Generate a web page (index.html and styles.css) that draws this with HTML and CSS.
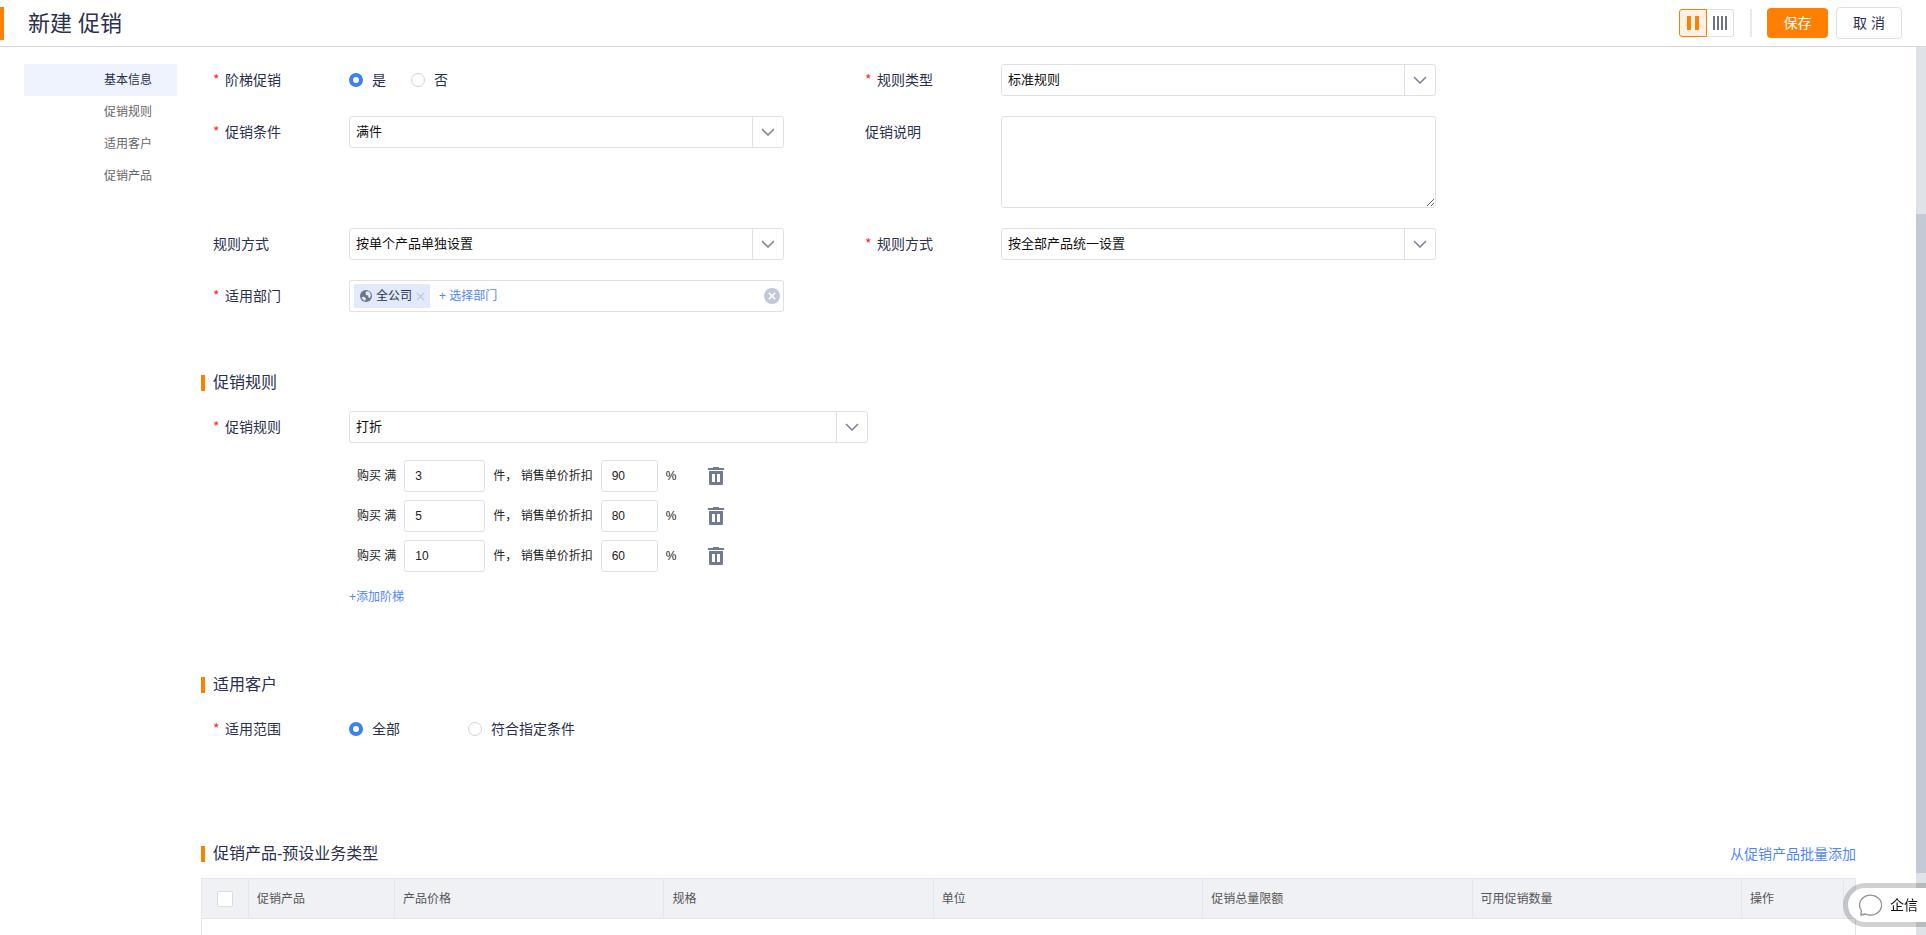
FILE: index.html
```html
<!DOCTYPE html>
<html lang="zh-CN">
<head>
<meta charset="utf-8">
<title>新建 促销</title>
<link rel="stylesheet" href="styles.css">
</head>
<body>
<svg class="symbols" aria-hidden="true">
  <symbol id="chevron" viewBox="0 0 14 8"><path d="M1 1l6 6 6-6" fill="none" stroke="currentColor" stroke-width="1.6"/></symbol>
  <symbol id="trash" viewBox="0 0 16 18"><path d="M5 0h6v1h5v2H0V1h5zM1 4h14v12.500a1.500 1.500 0 0 1-1.500 1.500h-11A1.500 1.500 0 0 1 1 16.500zM4 7v8h3V7zM9 7v8h3V7z" fill="currentColor" fill-rule="evenodd"/></symbol>
</svg>
<div class="app">
  <header class="topbar">
    <h1 class="topbar-title">新建 促销</h1>
    <div class="layout-switch">
      <button class="switch-btn active" type="button" aria-label="两列布局"><svg width="14" height="14" viewBox="0 0 14 14"><path d="M1 0h4v14H1zM9 0h4v14H9z" fill="currentColor"/></svg></button>
      <button class="switch-btn" type="button" aria-label="四列布局"><svg width="16" height="14" viewBox="0 0 16 14"><path d="M1 0h2v14H1zM5 0h2v14H5zM9 0h2v14H9zM13 0h2v14h-2z" fill="currentColor"/></svg></button>
    </div>
    <span class="topbar-divider"></span>
    <button class="btn btn-primary" type="button">保存</button>
    <button class="btn btn-plain" type="button">取 消</button>
  </header>

  <div class="body">
    <nav class="sidebar">
      <a class="nav-link active" href="#basic">基本信息</a>
      <a class="nav-link" href="#rules">促销规则</a>
      <a class="nav-link" href="#customers">适用客户</a>
      <a class="nav-link" href="#products">促销产品</a>
    </nav>

    <main class="content">
      <section class="form-grid" id="basic">
        <div class="field" role="radiogroup" aria-labelledby="ladder-label">
          <span class="label required" id="ladder-label">阶梯促销</span>
          <div class="radios">
            <label class="radio"><input type="radio" name="ladder" checked>是</label>
            <label class="radio"><input type="radio" name="ladder">否</label>
          </div>
        </div>
        <div class="field">
          <label class="label required" for="rule-type">规则类型</label>
          <div class="select"><select id="rule-type"><option>标准规则</option></select><svg class="chevron"><use href="#chevron"/></svg></div>
        </div>
        <div class="field">
          <label class="label required" for="condition">促销条件</label>
          <div class="select"><select id="condition"><option>满件</option></select><svg class="chevron"><use href="#chevron"/></svg></div>
        </div>
        <div class="field">
          <label class="label" for="description">促销说明</label>
          <textarea class="textarea" id="description"></textarea>
        </div>
        <div class="field">
          <label class="label" for="mode-single">规则方式</label>
          <div class="select"><select id="mode-single"><option>按单个产品单独设置</option></select><svg class="chevron"><use href="#chevron"/></svg></div>
        </div>
        <div class="field">
          <label class="label required" for="mode-all">规则方式</label>
          <div class="select"><select id="mode-all"><option>按全部产品统一设置</option></select><svg class="chevron"><use href="#chevron"/></svg></div>
        </div>
        <div class="field">
          <span class="label required">适用部门</span>
          <div class="picker">
            <span class="tag">
              <svg width="12" height="12" viewBox="0 0 12 12"><circle cx="6" cy="6" r="6" fill="#6b7686"/><path d="M1.500 7.500Q3 6.500 4.500 7L6 8.500 5.200 10.800Q2.500 10 1.500 7.500zM6 1.500L8.500 1.300Q10.500 2.500 10.900 5.500L10 8 8.500 7.800 8 5.500 6 5 5.500 3z" fill="#e1e9fa"/></svg>
              全公司
              <button class="tag-close" type="button" aria-label="移除"><svg width="9" height="9" viewBox="0 0 9 9"><path d="M1 1l7 7M8 1L1 8" stroke="currentColor" stroke-width="1.300"/></svg></button>
            </span>
            <a class="link link-small" href="#basic">+ 选择部门</a>
            <button class="clear" type="button" aria-label="清空"><svg width="16" height="16" viewBox="0 0 16 16"><circle cx="8" cy="8" r="8" fill="#c1c8d6"/><path d="M4.800 4.800l6.400 6.400M11.200 4.800l-6.400 6.400" stroke="#fff" stroke-width="1.600"/></svg></button>
          </div>
        </div>
      </section>

      <section class="section" id="rules">
        <div class="section-head"><h2 class="section-title">促销规则</h2></div>
        <div class="field field-wide">
          <label class="label required" for="rule">促销规则</label>
          <div class="select"><select id="rule"><option>打折</option></select><svg class="chevron"><use href="#chevron"/></svg></div>
        </div>
        <div class="tiers">
          <div class="tier">
            <label for="qty1">购买 满</label><input class="input qty" id="qty1" type="text" value="3">
            <label for="pct1">件， 销售单价折扣</label><input class="input pct" id="pct1" type="text" value="90"><span>%</span>
            <button class="trash" type="button" aria-label="删除"><svg><use href="#trash"/></svg></button>
          </div>
          <div class="tier">
            <label for="qty2">购买 满</label><input class="input qty" id="qty2" type="text" value="5">
            <label for="pct2">件， 销售单价折扣</label><input class="input pct" id="pct2" type="text" value="80"><span>%</span>
            <button class="trash" type="button" aria-label="删除"><svg><use href="#trash"/></svg></button>
          </div>
          <div class="tier">
            <label for="qty3">购买 满</label><input class="input qty" id="qty3" type="text" value="10">
            <label for="pct3">件， 销售单价折扣</label><input class="input pct" id="pct3" type="text" value="60"><span>%</span>
            <button class="trash" type="button" aria-label="删除"><svg><use href="#trash"/></svg></button>
          </div>
          <a class="link link-small add-tier" href="#rules">+添加阶梯</a>
        </div>
      </section>

      <section class="section" id="customers">
        <div class="section-head"><h2 class="section-title">适用客户</h2></div>
        <div class="field" role="radiogroup" aria-labelledby="scope-label">
          <span class="label required" id="scope-label">适用范围</span>
          <div class="radios radios-spread">
            <label class="radio"><input type="radio" name="scope" checked>全部</label>
            <label class="radio"><input type="radio" name="scope">符合指定条件</label>
          </div>
        </div>
      </section>

      <section class="section section-products" id="products">
        <div class="section-head"><h2 class="section-title">促销产品-预设业务类型</h2><a class="link" href="#products">从促销产品批量添加</a></div>
        <table class="table">
          <colgroup><col class="col-check"><col class="col-product"><col><col><col><col><col><col class="col-action"><col class="col-end"></colgroup>
          <thead>
            <tr><th class="check-cell"><input type="checkbox" aria-label="全选"></th><th>促销产品</th><th>产品价格</th><th>规格</th><th>单位</th><th>促销总量限额</th><th>可用促销数量</th><th>操作</th><th></th></tr>
          </thead>
          <tbody><tr><td class="empty" colspan="9"></td></tr></tbody>
        </table>
      </section>
    </main>

    <div class="scrollbar"><div class="scroll-thumb"></div></div>
  </div>
</div>

<button class="chat" type="button">
  <svg width="24" height="24" viewBox="0 0 24 24"><path d="M3.300 17.500A11 10 0 1 1 7.500 21L3 22z" fill="none" stroke="#8a909c" stroke-width="1.300" stroke-linejoin="round"/></svg>
  企信
</button>
</body>
</html>
```

FILE: styles.css
```css
* { box-sizing: border-box; }

body {
  margin: 0;
  background: #fff;
  color: #2a304d;
  font: 14px/20px "Liberation Sans", "Noto Sans CJK SC", sans-serif;
}

button, input, select, textarea { font: inherit; color: inherit; margin: 0; }
button { border: 0; padding: 0; background: none; cursor: pointer; }
a { text-decoration: none; }

.symbols { display: none; }

.app { display: flex; flex-direction: column; height: 100vh; overflow: hidden; }

/* Top bar */
.topbar {
  display: flex;
  align-items: center;
  flex: none;
  height: 47px;
  padding-right: 24px;
  border-bottom: 1px solid #d8d8d8;
}
.topbar-title {
  flex: 1;
  margin: 0;
  padding-left: 24px;
  border-left: 4px solid #ff8000;
  font-size: 22px;
  font-weight: 400;
  line-height: 33px;
}
.layout-switch { display: flex; height: 28px; }
.switch-btn {
  display: grid;
  place-items: center;
  width: 27px;
  border: 1px solid #dfe1e8;
  border-left: 0;
  border-radius: 0 3px 3px 0;
  color: #6b7284;
}
.switch-btn.active {
  width: 28px;
  border: 1px solid #ff8000;
  border-radius: 3px 0 0 3px;
  background: #fff0e5;
  color: #ff8000;
}
.topbar-divider { width: 2px; height: 28px; margin: 0 15px 0 16px; background: #e9eaef; }
.btn { border-radius: 4px; }
.btn-primary { width: 61px; height: 30px; background: #ff8000; color: #fff; }
.btn-plain { width: 66px; height: 32px; margin-left: 8px; border: 1px solid #dfe1e8; }

/* Body */
.body { display: flex; flex: 1; min-height: 0; }
.sidebar { flex: none; width: 153px; margin: 17px 24px 0; }
.nav-link {
  display: block;
  padding-right: 25px;
  border-radius: 2px;
  color: #666;
  font-size: 12px;
  line-height: 32px;
  text-align: right;
}
.nav-link.active { background: #eff3fd; color: #2a304d; }
.content { flex: 1; min-width: 0; padding: 17px 60px 0 0; overflow: hidden; }

.scrollbar { flex: none; width: 10px; padding: 167px 0 62px; background: #dfe2e7; }
.scroll-thumb { height: 100%; background: #c3cad6; }

/* Form */
.form-grid {
  display: grid;
  grid-template-columns: 1fr 1fr;
  gap: 20px 81px;
  padding: 0 420px 0 12px;
}
.field { display: flex; align-items: flex-start; }
.label { flex: none; width: 136px; line-height: 32px; }
.required::before {
  content: "*";
  display: inline-block;
  width: 12px;
  color: #ff2a1a;
  font-family: "Noto Sans CJK SC", sans-serif;
  line-height: 20px;
}

.radios { display: flex; gap: 25px; height: 32px; }
.radios-spread { gap: 68px; }
.radio { display: flex; align-items: center; gap: 9px; }
.radio input {
  appearance: none;
  width: 14px;
  height: 14px;
  border: 1px solid #d4d4d4;
  border-radius: 50%;
}
.radio input:checked { border: 4px solid #3b82ee; }

.select { position: relative; flex: 1; }
.select select {
  appearance: none;
  display: block;
  width: 100%;
  height: 32px;
  padding: 0 38px 0 6px;
  border: 1px solid #dfe1e8;
  border-radius: 3px;
  background: #fff;
  color: #111;
  font-size: 13px;
}
.chevron {
  position: absolute;
  top: 1px;
  right: 1px;
  width: 31px;
  height: 30px;
  padding: 11px 8px;
  border-left: 1px solid #dfe1e8;
  color: #7c8598;
  pointer-events: none;
}
.textarea {
  flex: 1;
  height: 92px;
  padding: 6px;
  border: 1px solid #dfe1e8;
  border-radius: 3px;
  resize: vertical;
}

.picker {
  display: flex;
  flex: 1;
  align-items: center;
  height: 32px;
  padding: 0 3px 0 4px;
  border: 1px solid #dfe1e8;
  border-radius: 2px;
}
.tag {
  display: flex;
  align-items: center;
  gap: 4px;
  height: 24px;
  padding: 0 5px 0 6px;
  border-radius: 2px;
  background: #e1e9fa;
  font-size: 12px;
}
.tag-close { display: flex; color: #c1c8d6; }
.picker .link { margin-left: 9px; }
.clear { display: flex; margin-left: auto; }

.link { color: #4f86ff; }
.link-small { font-size: 12px; }

/* Sections */
.section { padding-top: 61px; }
.section-head { display: flex; align-items: center; justify-content: space-between; height: 20px; margin-bottom: 18px; }
.section-title {
  margin: 0;
  padding-left: 8px;
  border-left: 4px solid #ff8000;
  font-size: 16px;
  font-weight: 400;
  line-height: 16px;
}
.section .field { padding-left: 12px; }
.section .field-wide { width: 667px; max-width: 100%; }

.tiers {
  display: flex;
  flex-direction: column;
  gap: 8px;
  align-items: flex-start;
  padding: 17px 0 0 148px;
}
.tier { display: flex; align-items: center; gap: 8px; padding-left: 8px; color: #222; font-size: 12px; }
.input {
  height: 32px;
  padding: 0 10px;
  border: 1px solid #dfe1e8;
  border-radius: 3px;
  background: #fff;
}
.qty { width: 81px; }
.pct { width: 57px; }
.trash { display: flex; margin-left: 24px; color: #727b8e; }
.trash svg { width: 16px; height: 18px; }
.add-tier { margin-top: 7px; }

#customers { padding-top: 68px; }
.section-products { padding-top: 99px; }
.section-products .section-head { margin-bottom: 14px; }

/* Table */
.table { width: 100%; border-collapse: collapse; table-layout: fixed; border: 1px solid #e3e6ef; }
.col-check { width: 47px; }
.col-product { width: 146px; }
.col-action { width: 102px; }
.col-end { width: 12px; }
.table th {
  height: 40px;
  padding: 0 8px;
  border: 1px solid #e3e6ef;
  background: #f0f1f5;
  color: #555;
  font-size: 12px;
  font-weight: 400;
  text-align: left;
}
.table .check-cell { text-align: center; }
.check-cell input {
  appearance: none;
  display: block;
  width: 16px;
  height: 16px;
  margin: 0 auto;
  border: 1px solid #dcdcdc;
  border-radius: 2px;
  background: #fff;
}
.empty { height: 80px; }

/* Floating chat entry */
.chat {
  position: fixed;
  right: 0;
  bottom: 8px;
  display: flex;
  align-items: center;
  gap: 8px;
  height: 44px;
  padding: 0 8px 0 10px;
  border: 5px solid rgba(0, 0, 0, .18);
  border-right: 0;
  border-radius: 22px 0 0 22px;
  background: #fff;
  background-clip: padding-box;
  color: #111;
}
```
